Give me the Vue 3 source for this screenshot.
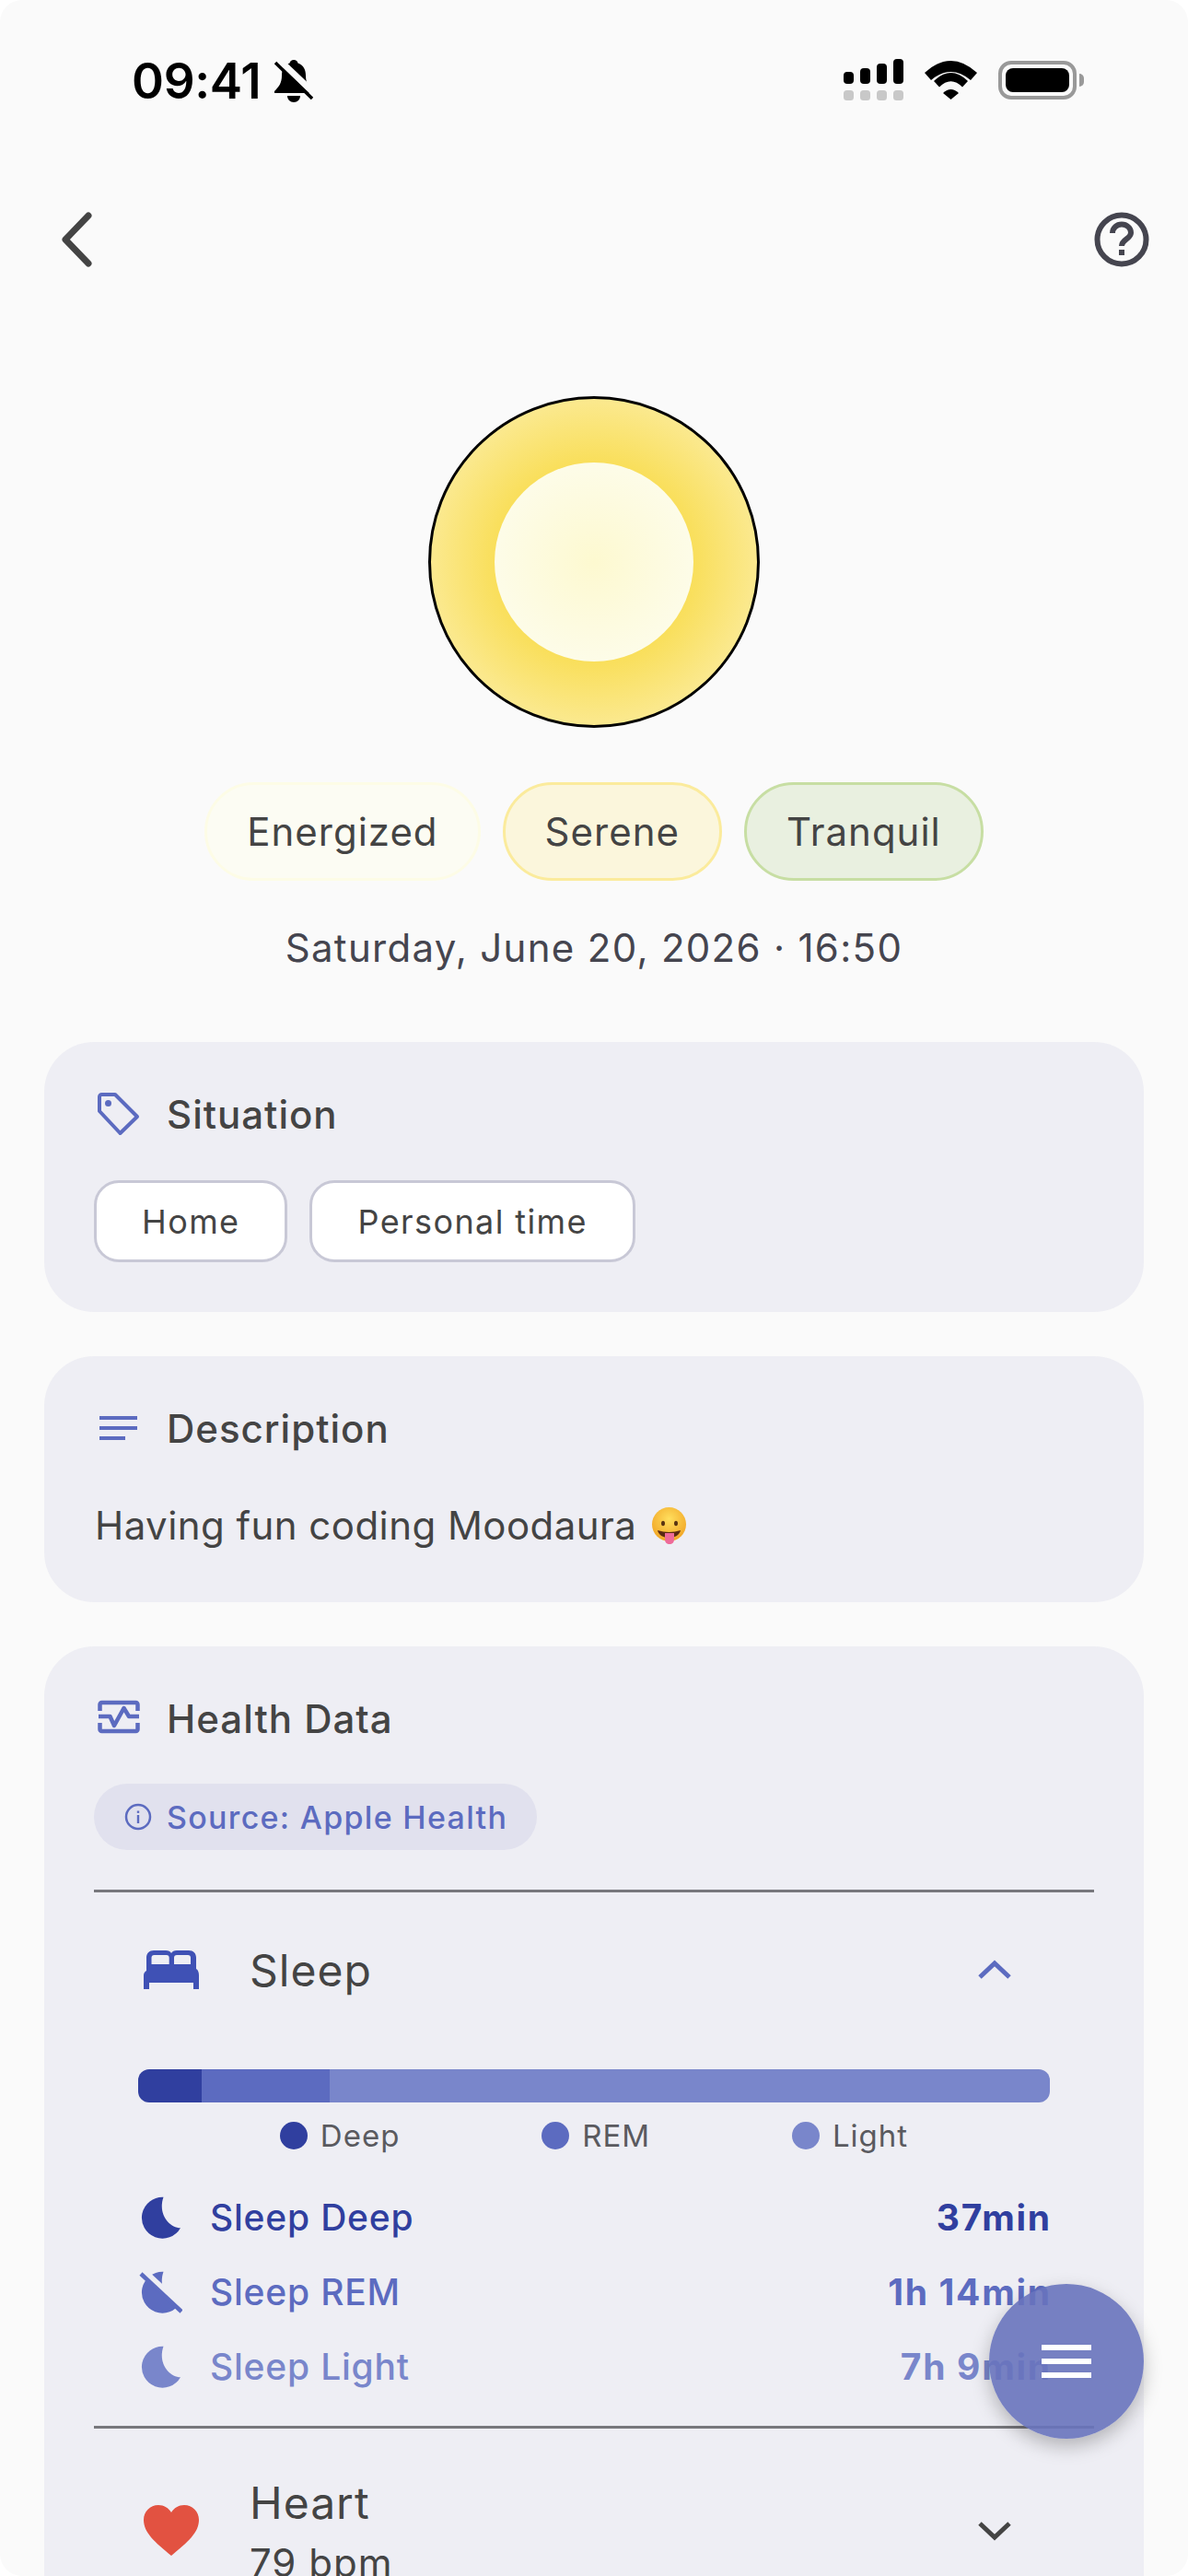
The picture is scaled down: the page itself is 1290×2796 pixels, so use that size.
<script setup>
const moods = [
  { label: 'Energized', cls: 'm-energized' },
  { label: 'Serene', cls: 'm-serene' },
  { label: 'Tranquil', cls: 'm-tranquil' }
]
const situation = ['Home', 'Personal time']
const stages = [
  { key: 'deep', legend: 'Deep', name: 'Sleep Deep', value: '37min', share: 69, color: '#303f9f' },
  { key: 'rem', legend: 'REM', name: 'Sleep REM', value: '1h 14min', share: 139, color: '#5c6bc0' },
  { key: 'light', legend: 'Light', name: 'Sleep Light', value: '7h 9min', share: 782, color: '#7986cb' }
]
const moon = 'M27.500 1.700A22.500 22.500 0 1 0 46 35.300C34 35 21 20 27.500 1.700z'
</script>

<template>
  <div class="screen">
    <div class="status">
      <div class="status-left">
        <span class="clock">09:41</span>
        <svg class="bell" viewBox="0 0 42 46" width="42" height="46">
          <path d="M21 0c-2.500 0-4 1.500-4.500 3.500C10 6 8 11 8 17c0 8-3 12-8 17v2h42v-2c-5-5-8-9-8-17 0-6-2-11-8.500-13.500C25 1.500 23.500 0 21 0z" fill="#000" />
          <path d="M14 39c0 4 3 7 7 7s7-3 7-7z" fill="#000" />
          <path d="M5 0 L46 39" stroke="#fafafa" stroke-width="7" />
          <path d="M1 3 L41 42" stroke="#000" stroke-width="3.500" />
        </svg>
      </div>
      <div class="status-right">
        <svg viewBox="0 0 65 45" width="65" height="45">
          <rect x="0" y="14" width="11" height="13" rx="4" fill="#000" />
          <rect x="18" y="10" width="11" height="17" rx="4" fill="#000" />
          <rect x="36" y="5" width="11" height="22" rx="4" fill="#000" />
          <rect x="54" y="0" width="11" height="27" rx="4" fill="#000" />
          <rect x="0" y="34" width="11" height="11" rx="3.500" fill="#c8c8c8" />
          <rect x="18" y="34" width="11" height="11" rx="3.500" fill="#c8c8c8" />
          <rect x="36" y="34" width="11" height="11" rx="3.500" fill="#c8c8c8" />
          <rect x="54" y="34" width="11" height="11" rx="3.500" fill="#c8c8c8" />
        </svg>
        <svg viewBox="0 0 57 42" width="57" height="42">
          <path d="M0 13Q28.500-13 57 13L50 21Q28.500 3 7 21z" fill="#000" />
          <path d="M10 22Q28.500 4 47 22L41 28.500Q28.500 16 16 28.500z" fill="#000" />
          <path d="M20 35Q28.500 27 37 35L28.500 42z" fill="#000" />
        </svg>
        <div class="battery"><div class="battery-fill"></div></div>
      </div>
    </div>

    <div class="nav">
      <svg viewBox="0 0 44 64" width="44" height="64" fill="none">
        <path d="M36 6 L11 32 L36 58" stroke="#444" stroke-width="7" stroke-linecap="round" stroke-linejoin="round" />
      </svg>
      <svg viewBox="0 0 60 60" width="60" height="60" fill="none">
        <circle cx="30" cy="30" r="26.500" stroke="#45454f" stroke-width="6" />
        <path d="M20 23c0-5.500 4.500-9.500 10-9.500s10 4 10 9c0 7-10 7-10 14.500" stroke="#45454f" stroke-width="6" />
        <rect x="27" y="41" width="6" height="6" fill="#45454f" />
      </svg>
    </div>

    <div class="hero">
      <div class="orb"><div class="orb-core"></div></div>
      <div class="moods">
        <span v-for="m in moods" :key="m.label" class="mood" :class="m.cls">{{ m.label }}</span>
      </div>
      <div class="date">Saturday, June 20, 2026 · 16:50</div>
    </div>

    <section class="card">
      <div class="card-head">
        <svg class="head-icon" viewBox="0 0 48 48" width="48" height="48" fill="none">
          <path d="M4 4.500A2.500 2.500 0 0 1 6.500 2H21l24 24-18.500 18L4 20z" stroke="#5c6bc0" stroke-width="4" stroke-linejoin="round" />
          <circle cx="13.500" cy="11.500" r="3.500" fill="#5c6bc0" />
        </svg>
        <h2>Situation</h2>
      </div>
      <div class="tags">
        <span v-for="s in situation" :key="s" class="tag">{{ s }}</span>
      </div>
    </section>

    <section class="card">
      <div class="card-head">
        <svg class="head-icon" viewBox="0 0 48 48" width="48" height="48">
          <rect x="4" y="10" width="41" height="4" fill="#5c6bc0" />
          <rect x="4" y="21" width="41" height="4" fill="#5c6bc0" />
          <rect x="4" y="32" width="28" height="4" fill="#5c6bc0" />
        </svg>
        <h2>Description</h2>
      </div>
      <p class="desc">
        Having fun coding Moodaura
        <svg class="emoji" viewBox="0 0 40 40" width="40" height="40">
          <defs>
            <radialGradient id="face" cx="50%" cy="35%" r="70%">
              <stop offset="0%" stop-color="#ffdf5e" />
              <stop offset="100%" stop-color="#f0a020" />
            </radialGradient>
          </defs>
          <circle cx="20.500" cy="18.500" r="18.500" fill="url(#face)" />
          <ellipse cx="14" cy="17.500" rx="2" ry="2.800" fill="#5a3512" />
          <ellipse cx="28" cy="17.500" rx="2" ry="2.800" fill="#5a3512" />
          <path d="M8 25c8 2.500 17 2.500 25 0-1 5-6 8-12.500 8S9 30 8 25z" fill="#5b2a12" />
          <path d="M16 28h10v7c0 3-2 5-5 5s-5-2-5-5z" fill="#ee6a98" />
        </svg>
      </p>
    </section>

    <section class="card card-health">
      <div class="card-head">
        <svg class="head-icon" viewBox="0 0 48 48" width="48" height="48" fill="none">
          <path d="M4.500 15V8a2 2 0 0 1 2-2h37a2 2 0 0 1 2 2v7M4.500 28v7a2 2 0 0 0 2 2h37a2 2 0 0 0 2-2v-7" stroke="#5c6bc0" stroke-width="4.500" />
          <path d="M3 21h12.500l4.500 10 10.500-19 5.500 9h11" stroke="#5c6bc0" stroke-width="4.500" stroke-linejoin="round" />
        </svg>
        <h2>Health Data</h2>
      </div>
      <div class="source">
        <svg viewBox="0 0 30 30" width="30" height="30" fill="none">
          <circle cx="15" cy="15" r="13" stroke="#5c6bc0" stroke-width="2.500" />
          <rect x="13.800" y="13" width="2.400" height="9" fill="#5c6bc0" />
          <rect x="13.800" y="8.500" width="2.400" height="2.400" fill="#5c6bc0" />
        </svg>
        <span>Source: Apple Health</span>
      </div>

      <div class="metric metric-open">
        <div class="metric-head">
          <svg class="metric-icon" viewBox="0 0 60 42" width="60" height="42">
            <path d="M3 22V8C3 3 6 0 11 0H24C27 0 29 1 30 3 31 1 33 0 36 0H49C54 0 57 3 57 8V20C59 21 60 24 60 27V42H54V35H6V42H0V27C0 25 1 23 3 22z" fill="#3f51b5" />
            <path d="M8.500 15V8A3 3 0 0 1 11.500 5H24.700A3 3 0 0 1 27.700 8V15z" fill="#eeeef4" />
            <path d="M33 15V8A3 3 0 0 1 36 5H48A3 3 0 0 1 51 8V15z" fill="#eeeef4" />
          </svg>
          <div class="metric-title">Sleep</div>
          <svg class="chevron" viewBox="0 0 36 22" width="36" height="22" fill="none">
            <path d="M2 19 L18 4 L34 19" stroke="#5c6bc0" stroke-width="5" />
          </svg>
        </div>
        <div class="bar">
          <div v-for="s in stages" :key="s.key" :style="{ flexGrow: s.share, background: s.color }"></div>
        </div>
        <div class="legend">
          <div v-for="s in stages" :key="s.key" class="legend-item">
            <span class="dot" :style="{ background: s.color }"></span>
            <span>{{ s.legend }}</span>
          </div>
        </div>
        <div class="stages">
          <div v-for="s in stages" :key="s.key" class="stage" :style="{ color: s.color }">
            <svg viewBox="0 0 48 48" width="48" height="48">
              <path :d="moon" fill="currentColor" />
              <g v-if="s.key === 'rem'">
                <path d="M6 1 L50 42" stroke="#eeeef4" stroke-width="7" />
                <path d="M3 4 L47 45" stroke="currentColor" stroke-width="4.500" />
              </g>
            </svg>
            <span class="stage-name">{{ s.name }}</span>
            <span class="stage-value">{{ s.value }}</span>
          </div>
        </div>
      </div>

      <div class="metric">
        <div class="metric-head metric-head-heart">
          <svg class="metric-icon" viewBox="0 0 60 56" width="60" height="56">
            <path d="M30 55C12 40 0 30 0 16 0 7 7 0 16 0c6 0 11 3 14 8 3-5 8-8 14-8 9 0 16 7 16 16 0 14-12 24-30 39z" fill="#e25241" />
          </svg>
          <div class="metric-title">
            Heart
            <div class="metric-sub">79 bpm</div>
          </div>
          <svg class="chevron" viewBox="0 0 36 22" width="36" height="22" fill="none">
            <path d="M2 3 L18 18 L34 3" stroke="#444" stroke-width="5" />
          </svg>
        </div>
      </div>
    </section>

    <div class="fab">
      <span></span><span></span><span></span>
    </div>
  </div>
</template>

<style>
body {
  background: #fff;
}
</style>

<style scoped>
.screen {
  position: relative;
  width: 1290px;
  height: 2796px;
  overflow: hidden;
  border-radius: 24px;
  background: #fafafa;
  font-family: Inter, "Liberation Sans", sans-serif;
  color: #444;
  box-sizing: border-box;
}
.status {
  height: 176px;
  box-sizing: border-box;
  padding: 60px 121px 0 143px;
  display: flex;
  justify-content: space-between;
  align-items: flex-start;
}
.status-left {
  display: flex;
  align-items: center;
  gap: 15px;
  margin-top: 4px;
}
.clock {
  font-size: 53px;
  font-weight: 600;
  color: #000;
  line-height: 48px;
  letter-spacing: -0.3px;
}
.status-right {
  display: flex;
  align-items: center;
  gap: 23px;
  padding-top: 4px;
}
.battery {
  position: relative;
  width: 85px;
  height: 42px;
  box-sizing: border-box;
  border: 4px solid #999;
  border-radius: 14px;
  padding: 4px;
}
.battery::after {
  content: "";
  position: absolute;
  right: -12px;
  top: 10px;
  width: 5px;
  height: 14px;
  border-radius: 0 5px 5px 0;
  background: #999;
}
.battery-fill {
  width: 100%;
  height: 100%;
  background: #000;
  border-radius: 8px;
}
.nav {
  display: flex;
  justify-content: space-between;
  align-items: center;
  padding: 52px 42px 0 60px;
}
.hero {
  display: flex;
  flex-direction: column;
  align-items: center;
  padding-top: 138px;
}
.orb {
  width: 360px;
  height: 360px;
  box-sizing: border-box;
  border: 3px solid #000;
  border-radius: 50%;
  display: flex;
  align-items: center;
  justify-content: center;
  background: radial-gradient(circle closest-side, #f9df5c 62%, #fbe98f 100%);
}
.orb-core {
  width: 216px;
  height: 216px;
  border-radius: 50%;
  background: radial-gradient(circle closest-side, #fdf9d0 0%, #fdfce8 100%);
}
.moods {
  display: flex;
  gap: 24px;
  margin-top: 59px;
}
.mood {
  height: 107px;
  box-sizing: border-box;
  padding: 0 43px;
  display: flex;
  align-items: center;
  border-radius: 54px;
  border: 3px solid;
  font-size: 42px;
  letter-spacing: 1px;
}
.m-energized { background: #fcfcf3; border-color: #fdfce6; }
.m-serene { background: #fbf6dc; border-color: #fbeb9c; }
.m-tranquil { background: #e9f0e0; border-color: #c7dea3; }
.date {
  margin-top: 48px;
  font-size: 42px;
  line-height: 50px;
  letter-spacing: 1.300px;
  color: #45454f;
}
.card {
  margin: 48px 48px 0;
  padding: 54px;
  background: #eeeef4;
  border-radius: 54px;
}
.hero + .card { margin-top: 77px; }
.card-head {
  display: flex;
  align-items: center;
  gap: 29px;
  height: 49px;
  margin-bottom: 1px;
}
.head-icon {
  flex: none;
  margin-left: 2px;
}
.card-head h2 {
  margin: 0;
  font-size: 42px;
  font-weight: 500;
  letter-spacing: 1px;
  color: #444;
}
.tags {
  display: flex;
  gap: 24px;
  margin-top: 47px;
}
.tag {
  height: 89px;
  box-sizing: border-box;
  padding: 0 49px;
  display: flex;
  align-items: center;
  background: #fff;
  border: 3px solid #c8c8d6;
  border-radius: 27px;
  font-size: 36px;
  letter-spacing: 1.400px;
}
.desc {
  display: flex;
  align-items: center;
  gap: 15px;
  margin: 52px 0 0 1px;
  font-size: 42px;
  line-height: 58px;
  letter-spacing: 0.450px;
}
.card-health {
  padding-bottom: 0;
}
.source {
  display: flex;
  align-items: center;
  gap: 16px;
  width: fit-content;
  margin-top: 46px;
  height: 72px;
  padding: 0 32px 0 33px;
  background: #e1e1ee;
  border-radius: 36px;
  font-size: 34px;
  font-weight: 500;
  letter-spacing: 1.300px;
  color: #5c6bc0;
}
.metric {
  border-top: 3px solid #77777c;
  padding: 0 48px;
}
.metric-open {
  margin-top: 43px;
  padding-bottom: 24px;
}
.metric-head {
  display: flex;
  align-items: center;
  gap: 55px;
  height: 168px;
  padding-left: 6px;
  padding-right: 42px;
}
.metric-head-heart { height: 222px; }
.metric-icon { flex: none; }
.metric-title {
  flex: 1;
  font-size: 48px;
  letter-spacing: 1px;
  color: #444;
}
.metric-sub {
  margin-top: 10px;
  font-size: 42px;
}
.chevron { flex: none; }
.bar {
  display: flex;
  height: 36px;
  border-radius: 12px;
  overflow: hidden;
  margin-top: 24px;
}
.legend {
  display: flex;
  justify-content: space-evenly;
  margin-top: 16px;
  font-size: 33px;
  letter-spacing: 1px;
  color: #5a5a5f;
}
.legend-item {
  display: flex;
  align-items: center;
  gap: 14px;
}
.dot {
  width: 30px;
  height: 30px;
  border-radius: 50%;
}
.stages {
  margin-top: 28px;
}
.stage {
  display: flex;
  align-items: center;
  height: 81px;
  font-size: 39px;
  letter-spacing: 0.800px;
}
.stage svg {
  flex: none;
  margin-right: 30px;
}
.stage-name {
  flex: 1;
  font-weight: 500;
}
.stage-value {
  font-weight: 700;
  letter-spacing: 1.700px;
  margin-right: -1.700px;
}
.fab {
  position: absolute;
  left: 1074px;
  top: 2479px;
  width: 168px;
  height: 168px;
  border-radius: 50%;
  background: rgba(104, 115, 189, 0.9);
  box-shadow: 0 8px 20px rgba(0, 0, 0, 0.25);
  display: flex;
  flex-direction: column;
  align-items: center;
  justify-content: center;
  gap: 9px;
}
.fab span {
  width: 54px;
  height: 6px;
  background: #fff;
}
</style>
